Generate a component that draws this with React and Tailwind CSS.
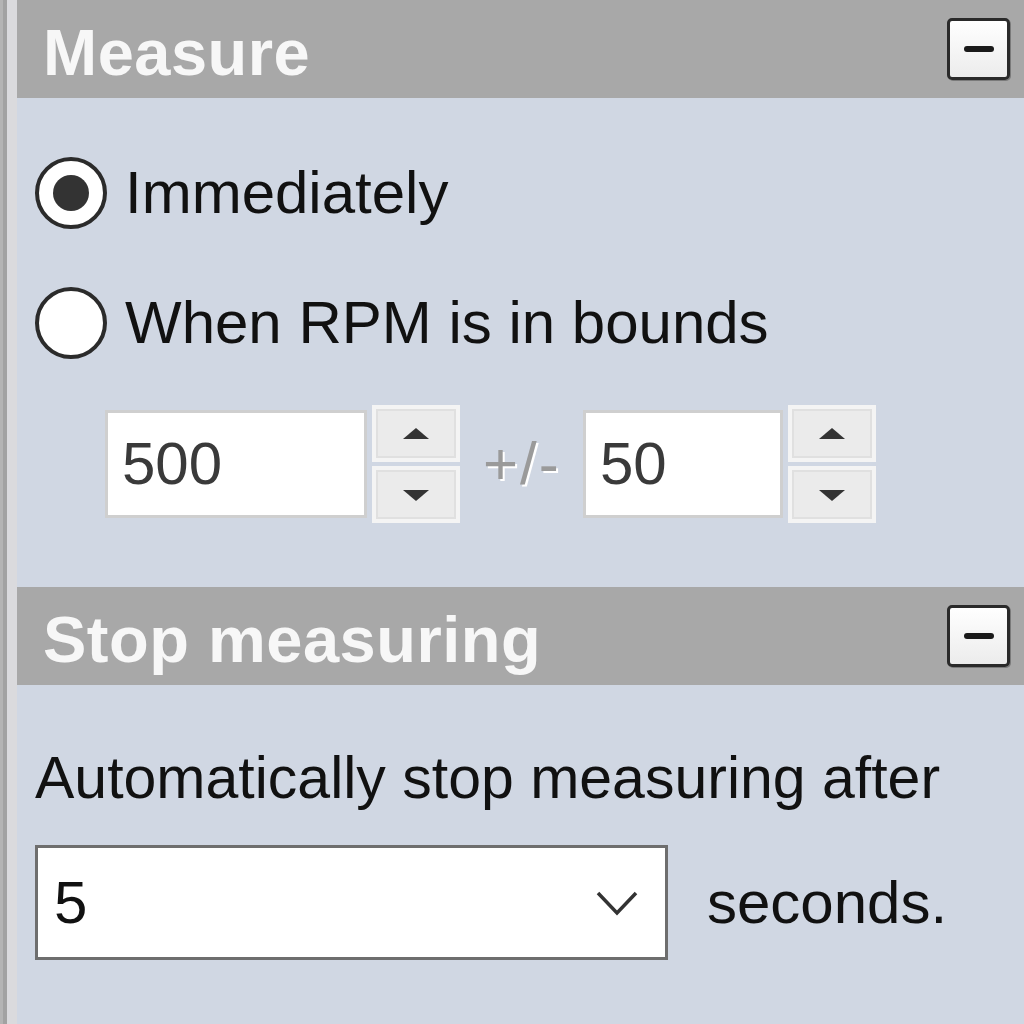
import React from 'react';

const font = { fontFamily: '"Liberation Sans", Arial, sans-serif' };

function MinusButton() {
  return (
    <div className="w-[63px] h-[62px] rounded-[5px] border-[3px] border-[#2a2a2a] bg-gradient-to-b from-white to-[#ececec] flex items-center justify-center shadow-[1px_1px_0_#7a7a7a]">
      <div className="w-[30px] h-[6px] rounded-full bg-[#1a1a1a]" />
    </div>
  );
}

function Header({ title }) {
  return (
    <div className="h-[98px] bg-[#a8a8a8] flex items-center justify-between pl-[26px] pr-[14px]">
      <span className="text-[65px] font-bold text-[#f7f7f7] leading-none pt-[6px] tracking-[0.5px]">{title}</span>
      <MinusButton />
    </div>
  );
}

function Radio({ checked, label }) {
  return (
    <div className="h-[70px] flex items-center pl-[18px] gap-[18px]">
      <div className="w-[72px] h-[72px] rounded-full border-[4px] border-[#2b2b2b] bg-white flex items-center justify-center">
        {checked && <div className="w-[36px] h-[36px] rounded-full bg-[#333333]" />}
      </div>
      <span className="text-[60px] leading-none text-[#111111]">{label}</span>
    </div>
  );
}

function Arrow({ up }) {
  return (
    <svg width="30" height="16" viewBox="0 0 30 16">
      {up ? <path d="M2 13 L15 2 L28 13 Z" fill="#333" /> : <path d="M2 3 L15 14 L28 3 Z" fill="#333" />}
    </svg>
  );
}

function Spinner({ value, width }) {
  return (
    <div className="flex items-center gap-[5px]">
      <div
        className="h-[108px] bg-white border-[3px] border-[#cfcfcf] flex items-center pl-[14px] text-[60px] text-[#3a3a3a] leading-none"
        style={{ width }}
      >
        {value}
      </div>
      <div className="w-[88px] h-[118px] flex flex-col gap-[4px]">
        <div className="flex-1 border-[4px] border-[#f4f4f4] bg-[#ebebeb] flex">
          <div className="flex-1 border-[2px] border-[#e0e0e0] flex items-center justify-center">
            <Arrow up />
          </div>
        </div>
        <div className="flex-1 border-[4px] border-[#f4f4f4] bg-[#ebebeb] flex">
          <div className="flex-1 border-[2px] border-[#e0e0e0] flex items-center justify-center">
            <Arrow />
          </div>
        </div>
      </div>
    </div>
  );
}

export default function App() {
  return (
    <div className="w-[1024px] h-[1024px] flex bg-[#d0d7e3] overflow-hidden" style={font}>
      <div className="w-[17px] flex shrink-0">
        <div className="w-[3px] bg-[#b4b4b4]" />
        <div className="w-[4px] bg-[#a2a2a2]" />
        <div className="w-[10px] bg-[#dadadd]" />
      </div>

      <div className="flex-1 flex flex-col">
        <Header title="Measure" />

        <div className="pt-[60px] flex flex-col gap-[60px]">
          <Radio checked label="Immediately" />
          <Radio label="When RPM is in bounds" />
        </div>

        <div className="mt-[47px] h-[118px] flex items-center pl-[88px]">
          <Spinner value="500" width={262} />
          <span
            className="ml-[23px] mr-[23px] w-[77px] text-[60px] leading-none text-[#9a9a9a] tracking-[2px]"
            style={{ textShadow: '2px 2px 0 #ffffff' }}
          >
            +/-
          </span>
          <Spinner value="50" width={200} />
        </div>

        <div className="mt-[64px]">
          <Header title="Stop measuring" />
        </div>

        <div className="mt-[58px] h-[70px] flex items-center pl-[18px]">
          <span className="text-[59px] leading-none text-[#111111]">Automatically stop measuring after</span>
        </div>

        <div className="mt-[32px] flex items-center pl-[18px] gap-[39px]">
          <div className="w-[633px] h-[115px] bg-white border-[3px] border-[#6e6e6e] flex items-center justify-between pl-[16px] pr-[26px]">
            <span className="text-[60px] leading-none text-[#111111]">5</span>
            <svg width="44" height="30" viewBox="0 0 44 30">
              <path d="M3 5 L22 25 L41 5" fill="none" stroke="#333" strokeWidth="3.5" />
            </svg>
          </div>
          <span className="text-[60px] leading-none text-[#111111]">seconds.</span>
        </div>
      </div>
    </div>
  );
}
